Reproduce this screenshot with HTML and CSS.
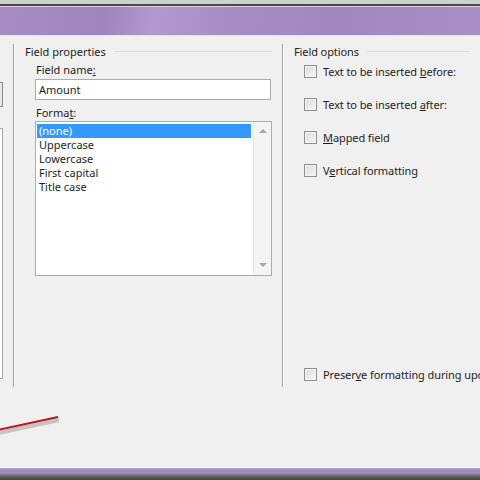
FILE: index.html
```html
<!DOCTYPE html>
<html lang="en">
<head>
    <meta charset="UTF-8">
    <title>Field properties</title>
    <link rel="stylesheet" href="styles.css">
</head>
<body>
    <div class="window">
        <div class="titlebar"></div>
        <div class="content">
            <div class="left-stub">
                <div class="stub-button"></div>
                <div class="stub-list"></div>
            </div>
            <div class="group props">
                <div class="group-title"><span>Field properties</span></div>
                <div class="label">Field name<u>:</u></div>
                <div class="textbox">Amount</div>
                <div class="label format">Forma<u>t</u>:</div>
                <div class="listbox">
                    <div class="items">
                        <div class="item selected">(none)</div>
                        <div class="item">Uppercase</div>
                        <div class="item">Lowercase</div>
                        <div class="item">First capital</div>
                        <div class="item">Title case</div>
                    </div>
                    <div class="scrollbar">
                        <span class="arrow up"></span>
                        <span class="arrow down"></span>
                    </div>
                </div>
            </div>
            <div class="group options">
                <div class="group-title"><span>Field options</span></div>
                <label class="check first"><span class="box"></span><span>Text to be inserted <u>b</u>efore:</span></label>
                <label class="check"><span class="box"></span><span>Text to be inserted <u>a</u>fter:</span></label>
                <label class="check"><span class="box"></span><span><u>M</u>apped field</span></label>
                <label class="check"><span class="box"></span><span>V<u>e</u>rtical formatting</span></label>
                <div class="spacer"></div>
                <label class="check last"><span class="box"></span><span>Preser<u>v</u>e formatting during updates</span></label>
            </div>
        </div>
        <div class="footer"></div>
        <svg class="pointer" width="70" height="30" viewBox="0 0 70 30">
            <line x1="-2" y1="17" x2="58" y2="4" stroke="rgba(0,0,0,0.18)" stroke-width="4" transform="translate(1,3)"/>
            <line x1="-2" y1="17" x2="58" y2="4" stroke="#c0141c" stroke-width="2"/>
        </svg>
    </div>
</body>
</html>
```

FILE: styles.css
```css
body {
    margin: 0;
    width: 480px;
    height: 480px;
    overflow: hidden;
    font-family: 'Noto Sans', 'DejaVu Sans', sans-serif;
    font-size: 11px;
    color: #1e1e1e;
    background: #f0f0f0;
}
.window {
    position: relative;
    height: 480px;
    display: flex;
    flex-direction: column;
}
.titlebar {
    height: 29px;
    border-top: 4px solid #cfcfcf;
    box-shadow: inset 0 2px 0 #4a4a4a, inset 0 3px 0 #d8d0e0, inset 0 -1px 0 #e6dff0;
    background: linear-gradient(100deg, #a98cc4 0%, #9f84bd 22%, #b398cd 32%, #a88dc5 48%, #a186bf 70%, #ab90c7 100%);
    padding-top: 3px;
}
.content {
    flex: 1;
    display: flex;
    padding-top: 8px;
}
.left-stub {
    width: 13px;
    height: 343px;
    border-right: 1px solid #a0a0a0;
    box-shadow: 1px 0 0 #fff;
    display: flex;
    flex-direction: column;
}
.stub-button {
    width: 2px;
    height: 23px;
    margin-top: 38px;
    border: 1px solid #8a8a8a;
    border-left: none;
    background: #e8e8e8;
}
.stub-list {
    width: 2px;
    height: 249px;
    margin-top: 21px;
    border: 1px solid #a8a8a8;
    border-left: none;
    background: #fff;
}
.group {
    display: flex;
    flex-direction: column;
}
.props {
    width: 257px;
    height: 343px;
    padding-left: 11px;
    border-right: 1px solid #a0a0a0;
    box-shadow: 1px 0 0 #fff;
}
.options {
    flex: 1;
    padding-left: 11px;
    white-space: nowrap;
    overflow: hidden;
    letter-spacing: -0.1px;
}
.group-title {
    display: flex;
    align-items: center;
    height: 15px;
    margin-right: 10px;
}
.group-title::after {
    content: "";
    flex: 1;
    height: 1px;
    margin-left: 8px;
    background: #dcdcdc;
}
.label {
    margin: 3px 0 0 11px;
    height: 15px;
    line-height: 15px;
}
.label.format {
    margin-top: 5px;
}
.textbox {
    margin: 2px 0 0 10px;
    width: 231px;
    height: 19px;
    line-height: 19px;
    padding-left: 3px;
    border: 1px solid #acacac;
    background: #fff;
}
.listbox {
    margin: 1px 0 0 10px;
    width: 235px;
    height: 153px;
    border: 1px solid #acacac;
    background: #fff;
    display: flex;
}
.items {
    flex: 1;
    padding: 2px 2px 0 1px;
}
.item {
    height: 14px;
    line-height: 14px;
    padding-left: 2px;
}
.item.selected {
    background: #3399ff;
    color: #fff;
}
.scrollbar {
    width: 17px;
    background: #f4f4f4;
    border-left: 1px solid #e8e8e8;
    display: flex;
    flex-direction: column;
    justify-content: space-between;
    align-items: center;
    padding: 7px 0 8px;
}
.arrow {
    width: 0;
    height: 0;
    border-left: 4px solid transparent;
    border-right: 4px solid transparent;
}
.arrow.up {
    border-bottom: 4px solid #a6a6a6;
}
.arrow.down {
    border-top: 4px solid #a6a6a6;
}
.check {
    display: flex;
    align-items: center;
    margin-left: 10px;
    height: 15px;
    margin-top: 18px;
}
.check.first {
    margin-top: 5px;
}
.box {
    flex-shrink: 0;
    width: 11px;
    height: 11px;
    margin-right: 6px;
    border: 1px solid #8e8f8f;
    background: linear-gradient(135deg, #dcdcdc, #f6f6f6);
    box-shadow: inset 0 0 0 1px #f4f4f4;
}
.spacer {
    height: 171px;
}
.footer {
    height: 12px;
    border-top: 1px solid #fafafa;
    background: linear-gradient(#b8a4d0 0px, #a48ac2 2px, #a68cc4 5px, #8a8a8a 6px, #5a5a5a 9px, #444 12px);
}
.pointer {
    position: absolute;
    left: 0;
    top: 413px;
}
```
